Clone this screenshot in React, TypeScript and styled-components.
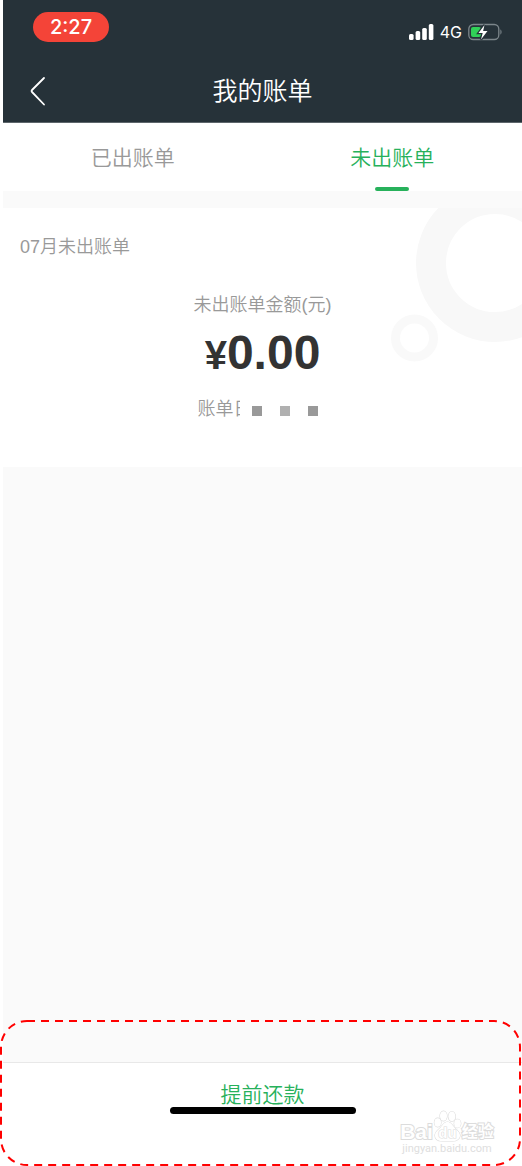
import React from "react";
import styled, { createGlobalStyle } from "styled-components";

const GlobalStyle = createGlobalStyle`
  *, *::before, *::after { box-sizing: border-box; }
  body {
    margin: 0;
    background: #fff;
    font-family: "Liberation Sans", "Noto Sans CJK SC", sans-serif;
    font-weight: 350;
  }
  button { font: inherit; border: 0; padding: 0; background: none; cursor: pointer; }
`;

const Screen = styled.div`
  position: relative;
  min-height: 100vh;
  display: flex;
  flex-direction: column;
  padding-left: 3px;
`;

const Header = styled.header`
  background: #263239;
  color: #fff;
  border-bottom: 1px solid #5d666b;
`;

const StatusBar = styled.div`
  display: flex;
  justify-content: space-between;
  height: 60px;
  padding: 12px 20px 0 30px;
`;

const Clock = styled.time`
  width: 76px;
  height: 30px;
  border-radius: 15px;
  background: #f44438;
  font: 500 20px/30px Inter, sans-serif;
  text-align: center;
`;

const Signals = styled.div`
  display: flex;
  align-items: center;
  gap: 6px;
  height: 40px;
  font: 400 16px/20px Inter, sans-serif;
`;

const NavBar = styled.div`
  display: grid;
  grid-template-columns: 70px 1fr 70px;
  align-items: center;
  height: 62px;
`;

const BackButton = styled.button`
  display: flex;
  height: 62px;
  padding-left: 26px;
  align-items: center;
`;

const Title = styled.h1`
  margin: 0;
  font-size: 25px;
  font-weight: 350;
  line-height: 36px;
  text-align: center;
`;

const Tabs = styled.nav`
  display: flex;
  height: 68px;
  background: #fff;
`;

const Tab = styled.button<{ $active?: boolean }>`
  flex: 1;
  display: flex;
  flex-direction: column;
  align-items: center;
  justify-content: space-between;
  padding-top: 20px;
  font-size: 21px;
  line-height: 30px;
  color: ${(p) => (p.$active ? "#27b15b" : "#999")};

  &::after {
    content: "";
    width: 34px;
    height: 4px;
    border-radius: 2px;
    background: ${(p) => (p.$active ? "#27b15b" : "transparent")};
  }
`;

const Content = styled.main`
  flex: 1;
  padding: 17px 0;
  background: #fafafa;
`;

const BillCard = styled.section`
  position: relative;
  overflow: hidden;
  height: 259px;
  padding: 25px 17px;
  background: #fff;
  color: #999;
  font-size: 18px;
  line-height: 28px;
`;

const Rings = styled.svg`
  position: absolute;
  top: 0;
  right: 0;
`;

const Month = styled.h2`
  margin: 0;
  font-size: 18px;
  font-weight: 350;
  line-height: 28px;
`;

const Summary = styled.div`
  position: relative;
  display: flex;
  flex-direction: column;
  align-items: center;
  padding-top: 30px;
`;

const Amount = styled.strong`
  margin-top: 4px;
  color: #333;
  font-size: 48px;
  font-weight: 700;
  line-height: 60px;
`;

const Currency = styled.span`
  font-size: 40px;
`;

const BillDate = styled.div`
  display: flex;
  align-items: center;
  margin-top: 10px;
`;

const Redaction = styled.span`
  position: relative;
  display: flex;
  align-items: center;
  gap: 18px;
  height: 28px;
  margin-left: -12px;
  padding: 4px 10px 0 12px;
  background: #fff;
`;

const Mask = styled.i<{ $light?: boolean }>`
  width: 10px;
  height: 10px;
  background: ${(p) => (p.$light ? "#b0b0b0" : "#999")};
`;

const Footer = styled.footer`
  display: flex;
  flex-direction: column;
  align-items: center;
  height: 104px;
  padding-top: 16px;
  border-top: 1px solid #e8e8e8;
  background: #fff;
`;

const RepayButton = styled.button`
  height: 28px;
  color: #27b15b;
  font-size: 21px;
  line-height: 32px;
`;

const HomeIndicator = styled.div`
  width: 186px;
  height: 7px;
  border-radius: 4px;
  background: #000;
`;

const Highlight = styled.svg`
  position: absolute;
  left: 0;
  bottom: 0;
  width: 100%;
  height: 146px;
  pointer-events: none;

  rect {
    width: calc(100% - 3px);
    height: 144px;
  }
`;

const Watermark = styled.div`
  position: absolute;
  right: 26px;
  bottom: 10px;
  width: 98px;
  color: #fff;
  text-align: center;
  pointer-events: none;
`;

const Brand = styled.div`
  display: flex;
  align-items: flex-end;
  justify-content: center;
  height: 32px;
  font-size: 21px;
  font-weight: 700;
  line-height: 20px;
  paint-order: stroke;
  -webkit-text-stroke: 2px #dcdcdc;
`;

const BrandCn = styled.span`
  font-size: 16px;
`;

const Site = styled.div`
  font: 400 11px/14px Roboto, sans-serif;
  color: #dedede;
`;

const SignalIcon = () => (
  <svg width="25" height="16" viewBox="0 0 25 16" fill="#fff" aria-hidden="true">
    <rect x="0" y="10" width="4.6" height="6" rx="1.5" />
    <rect x="6.6" y="7" width="4.6" height="9" rx="1.5" />
    <rect x="13.2" y="4" width="4.6" height="12" rx="1.5" />
    <rect x="19.8" y="0" width="4.6" height="16" rx="1.5" />
  </svg>
);

const BatteryIcon = () => (
  <svg width="34" height="18" viewBox="0 0 34 18" aria-hidden="true">
    <rect x="0.8" y="1.5" width="30" height="15" rx="4.5" fill="none" stroke="#7c868b" strokeWidth="1.3" />
    <path d="M32.4 6.3c1.6 1 1.6 4.4 0 5.4z" fill="#7c868b" />
    <rect x="3" y="4" width="10" height="10" rx="2" fill="#30d158" />
    <path d="M16.500 2 10.500 10h4.2L13 16.500 19.500 8h-4.400z" fill="#fff" stroke="#263239" strokeWidth="2.4" paintOrder="stroke" />
  </svg>
);

const Paw = () => (
  <svg width="29" height="32" viewBox="0 0 28 32" fill="#fff" stroke="#dcdcdc" strokeWidth="1.2" aria-hidden="true">
    <path d="M14 12c-3 0-4.500 2.500-6.500 5S1.500 21.500 1.500 25.500 5 31 8.500 31h11c3.500 0 7-2 7-5.500s-4-6-6-8.500S17 12 14 12z" />
    <ellipse cx="4.200" cy="12.500" rx="3.300" ry="4.300" />
    <ellipse cx="10" cy="6" rx="3.500" ry="4.800" />
    <ellipse cx="18.400" cy="6.400" rx="3.500" ry="4.800" />
    <ellipse cx="24" cy="13.500" rx="3.300" ry="4.200" />
    <text x="14" y="28" textAnchor="middle" fontSize="15" fontWeight="700">du</text>
  </svg>
);

export default function App() {
  return (
    <Screen>
      <GlobalStyle />
      <Header>
        <StatusBar>
          <Clock>2:27</Clock>
          <Signals>
            <SignalIcon />
            <span>4G</span>
            <BatteryIcon />
          </Signals>
        </StatusBar>
        <NavBar>
          <BackButton aria-label="返回">
            <svg width="18" height="30" viewBox="0 0 18 30" fill="none" stroke="#fff" strokeWidth="1.8" strokeLinecap="round" strokeLinejoin="round">
              <path d="M15 2 3 14Q2 15 3 16L15 28.500" />
            </svg>
          </BackButton>
          <Title>我的账单</Title>
        </NavBar>
      </Header>

      <Tabs>
        <Tab>已出账单</Tab>
        <Tab $active aria-current="page">未出账单</Tab>
      </Tabs>

      <Content>
        <BillCard>
          <Rings width="135" height="160" viewBox="0 0 135 160" fill="none" aria-hidden="true">
            <circle cx="108" cy="55" r="64" stroke="#f8f8f8" strokeWidth="30" />
            <circle cx="27.500" cy="130" r="19" stroke="#f9f9f9" strokeWidth="9" />
          </Rings>
          <Month>07月未出账单</Month>
          <Summary>
            <span>未出账单金额(元)</span>
            <Amount>
              <Currency>¥</Currency>0.00
            </Amount>
            <BillDate>
              <span>账单日</span>
              <Redaction>
                <Mask />
                <Mask $light />
                <Mask />
              </Redaction>
            </BillDate>
          </Summary>
        </BillCard>
      </Content>

      <Footer>
        <RepayButton>提前还款</RepayButton>
        <HomeIndicator />
      </Footer>

      <Watermark>
        <Brand>
          <span>Bai</span>
          <Paw />
          <BrandCn>经验</BrandCn>
        </Brand>
        <Site>jingyan.baidu.com</Site>
      </Watermark>

      <Highlight aria-hidden="true">
        <rect x="1" y="1" rx="26" fill="none" stroke="#f00" strokeWidth="2" strokeDasharray="8 6" />
      </Highlight>
    </Screen>
  );
}
